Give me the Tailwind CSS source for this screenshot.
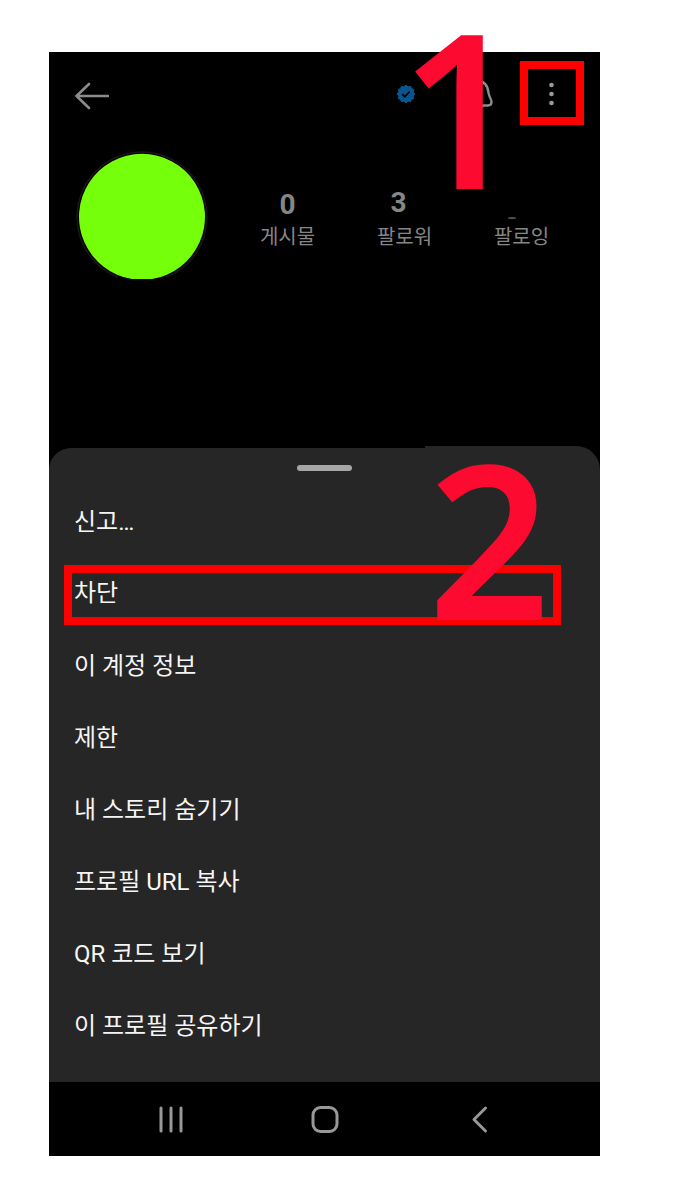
<!DOCTYPE html>
<html lang="ko">
<head>
<meta charset="utf-8">
<meta name="viewport" content="width=device-width, initial-scale=1">
<title>프로필 메뉴</title>
<script src="https://cdn.jsdelivr.net/npm/@tailwindcss/browser@4"></script>
</head>
<body class="bg-white font-[Roboto,'Noto_Sans_CJK_KR',sans-serif]">
<main class="pt-[52px] pr-[100px] pb-8 pl-[49px]">
  <div class="relative bg-black">
    <section class="flex min-h-[394px] flex-col text-[#868686]">
      <header class="flex h-[88px] items-center pr-4 pl-6">
        <button type="button" aria-label="뒤로" class="mr-auto">
          <svg class="block h-9 w-9" viewBox="0 0 36 36" fill="none" stroke="#8c8c8c" stroke-width="2.6" stroke-linecap="round" stroke-linejoin="round"><path d="M35 18H3.500M16 6L3.500 18L16 30"/></svg>
        </button>
        <svg class="mr-12 mb-1 block h-5 w-5" viewBox="-10 -10 20 20" role="img" aria-label="인증됨"><path fill="#08568f" stroke="#08568f" stroke-width="1" stroke-linejoin="round" d="M0-9L2-7L4.500-7.800L5.500-5.500L7.800-4.500L7-2L9 0L7 2L7.800 4.500L5.500 5.500L4.500 7.800L2 7L0 9L-2 7L-4.500 7.800L-5.500 5.500L-7.800 4.500L-7 2L-9 0L-7-2L-7.800-4.500L-5.500-5.500L-4.500-7.800L-2-7Z"/><path d="M-3.800.2L-1.200 2.700L3.800-2.500" fill="none" stroke="#000" stroke-width="1.800"/></svg>
        <button type="button" aria-label="알림" class="mr-6 mb-1">
          <svg class="block h-8 w-8" viewBox="0 0 32 32" fill="none" stroke="#8c8c8c" stroke-width="2.300" stroke-linejoin="round" stroke-linecap="round"><path d="M13 3C8 3 5 7 5 13C5 18 1 19 1 23Q1 27.500 4 27.500H24Q27.500 27.500 27.500 24C27.500 21 25.500 20 24.500 15C24 9 22 3 13 3ZM9 27.500C10 31 18 31 19 27.500"/></svg>
        </button>
        <button type="button" aria-label="더보기" class="mb-[6px] flex h-16 w-16 items-center justify-center border-8 border-[#ff0000]">
          <svg class="block h-7 w-2" viewBox="0 0 8 28" fill="#9a9a9a"><circle cx="3.500" cy="6" r="2.300"/><circle cx="3.500" cy="15" r="2.300"/><circle cx="3.500" cy="24" r="2.300"/></svg>
        </button>
      </header>
      <div class="flex pt-2 pl-6">
        <svg class="block h-[136px] w-[136px] shrink-0" viewBox="0 0 136 136" role="img" aria-label="프로필 사진"><path d="M45 129.500A65 65 0 1 1 93 129.500" fill="none" stroke="#1a151c" stroke-width="1.500"/><path fill="#76ff0a" d="M59 131A63 63 0 1 1 79 131Z"/></svg>
        <dl class="grid grow grid-cols-3 pt-[41px] pr-5 pl-5 text-center">
          <div class="flex flex-col-reverse justify-end"><dt class="text-xl leading-8">게시물</dt><dd class="h-8 text-[28px] leading-8 font-bold">0</dd></div>
          <div class="flex flex-col-reverse justify-end"><dt class="text-xl leading-8">팔로워</dt><dd class="h-8 pr-3 text-[28px] leading-7 font-bold">3</dd></div>
          <div class="flex flex-col-reverse justify-end"><dt class="text-xl leading-8">팔로잉</dt><dd class="flex h-8 items-end justify-center pr-5 pb-[2px]"><svg class="block h-[2px] w-2" viewBox="0 0 8 2"><path d="M0 1Q4 0 8 1Q4 2 0 1" fill="#888" stroke="#666" stroke-width=".5"/></svg></dd></div>
        </dl>
      </div>
    </section>

    <section aria-label="계정 메뉴" class="text-2xl text-[#f5f5f5]">
      <div class="flex h-[30px] items-end">
        <div class="h-7 grow rounded-tl-[22px] bg-[#262626]"></div>
        <div class="h-[30px] w-[175px] rounded-tr-[24px] bg-[#262626]"></div>
      </div>
      <div class="flex flex-col bg-[#262626] pb-5">
        <div class="-mt-7 flex h-[38px] items-center justify-center pt-[2px]"><div class="h-[6px] w-[55px] rounded-full bg-[#a6a6a6]"></div></div>
        <ul>
          <li><button type="button" class="flex h-[72px] w-full items-center pl-[25px]">신고…</button></li>
          <li class="flex h-[72px] items-center pt-[2px] pr-[39px] pl-[15px]"><button type="button" class="flex h-[60px] w-full items-center border-8 border-[#ff0000] pb-1 pl-[2px]">차단</button></li>
          <li><button type="button" class="flex h-[72px] w-full items-center pl-[25px]">이 계정 정보</button></li>
          <li><button type="button" class="flex h-[72px] w-full items-center pl-[25px]">제한</button></li>
          <li><button type="button" class="flex h-[72px] w-full items-center pl-[25px]">내 스토리 숨기기</button></li>
          <li><button type="button" class="flex h-[72px] w-full items-center pl-[25px]">프로필 URL 복사</button></li>
          <li><button type="button" class="flex h-[72px] w-full items-center pl-[25px]">QR 코드 보기</button></li>
          <li><button type="button" class="flex h-[72px] w-full items-center pl-[25px]">이 프로필 공유하기</button></li>
        </ul>
      </div>
    </section>

    <nav aria-label="시스템" class="flex h-[74px] items-center justify-between px-[105px]">
      <button type="button" aria-label="최근 앱"><svg class="block h-8 w-8" viewBox="0 0 32 32" stroke="#989898" stroke-width="3" stroke-linecap="round"><path d="M7 5V28M17 5V28M27 5V28"/></svg></button>
      <button type="button" aria-label="홈"><svg class="block h-8 w-8" viewBox="0 0 32 32" fill="none" stroke="#989898" stroke-width="3"><rect x="4" y="4.500" width="24" height="24" rx="7.500"/></svg></button>
      <button type="button" aria-label="뒤로 가기"><svg class="block h-8 w-8" viewBox="0 0 32 32" fill="none" stroke="#989898" stroke-width="3" stroke-linecap="round" stroke-linejoin="round"><path d="M22.500 5L11 16.500L22.500 28"/></svg></button>
    </nav>

    <span class="pointer-events-none absolute -top-[52px] right-[78px] font-['Open_Sans',sans-serif] text-[212px] leading-none font-semibold text-[#fc0a2f] [-webkit-text-stroke:2px_#fc0a2f]">1</span>
    <span class="pointer-events-none absolute top-[379px] right-[50px] font-['Open_Sans',sans-serif] text-[212px] leading-none font-semibold text-[#fc0a2f] [-webkit-text-stroke:2px_#fc0a2f]">2</span>
  </div>
</main>
</body>
</html>
